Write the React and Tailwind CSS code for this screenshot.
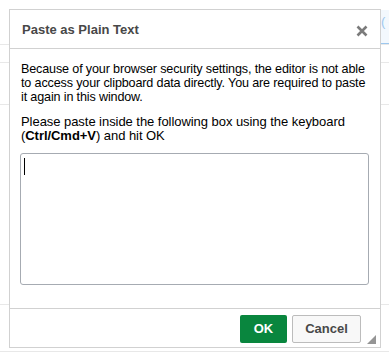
export default function App() {
  return (
    <div className="relative w-[389px] h-[355px] bg-white overflow-hidden" style={{ fontFamily: '"Liberation Sans", Arial, sans-serif' }}>
      {/* page behind the dialog */}
      <div className="flex flex-col">
        <div className="h-[10px]" />
        <div className="flex h-[34px]">
          <div className="flex-1" />
          <div className="w-[8px] ml-[373px] bg-[#f3f8fd] border-b border-[#9cc7ee] text-[#9cc7ee] text-[13px] leading-[23px]">(</div>
        </div>
        <div className="h-[18px] border-t border-[#e8e8e8]" />
        <div className="h-[42px] border-t border-[#e8e8e8]" />
        <div className="h-[200px] border-t border-[#e8e8e8]" />
        <div className="h-[47px] border-t border-[#e8e8e8]" />
        <div className="h-[5px] border-t border-[#e8e8e8]" />
      </div>

      {/* dialog */}
      <div className="absolute left-[9px] top-[9px] w-[372px] h-[339px] bg-white border border-[#d1d1d1] flex flex-col">
        <div className="h-[39px] shrink-0 border-b border-[#d1d1d1] flex items-center justify-between pl-[12px] pr-[12px]">
          <span className="text-[13px] font-bold text-[#484848] pt-[1px]">Paste as Plain Text</span>
          <svg width="12" height="12" viewBox="0 0 12 12" className="mt-[3px]">
            <path d="M1.5 1.5 L10.5 10.5 M10.5 1.5 L1.5 10.5" stroke="#7b7b7b" strokeWidth="2.6" strokeLinecap="butt" />
          </svg>
        </div>

        <div className="flex-1 pl-[11px] pt-[13px] text-[13px] leading-[14px] text-black">
          <p className="whitespace-nowrap text-[12.6px] tracking-[-0.15px]">
            Because of your browser security settings, the editor is not able<br />
            to access your clipboard data directly. You are required to paste<br />
            it again in this window.
          </p>
          <p className="mt-[11px] whitespace-nowrap tracking-[-0.05px]">
            Please paste inside the following box using the keyboard<br />
            (<b>Ctrl/Cmd+V</b>) and hit OK
          </p>
          <div className="mt-[10px] ml-[-1px] w-[349px] h-[132px] border border-[#a6abb2] rounded-[3px] relative">
            <div className="absolute left-[3px] top-[4px] w-[1px] h-[17px] bg-black" />
          </div>
        </div>

        <div className="h-[39px] shrink-0 border-t border-[#d1d1d1] flex items-center justify-end pr-[19px] gap-[5px] relative">
          <button className="w-[47px] h-[28px] mt-[2px] bg-[#09863e] rounded-[2px] text-white text-[13px] font-bold">OK</button>
          <button className="w-[69px] h-[28px] mt-[2px] bg-[#f8f8f8] border border-[#bcbcbc] rounded-[2px] text-[#484848] text-[13px] font-bold">Cancel</button>
          <svg width="9" height="9" viewBox="0 0 9 9" className="absolute right-[4px] bottom-[3px]">
            <path d="M9 0 L9 9 L0 9 Z" fill="#959595" />
          </svg>
        </div>
      </div>
    </div>
  );
}
